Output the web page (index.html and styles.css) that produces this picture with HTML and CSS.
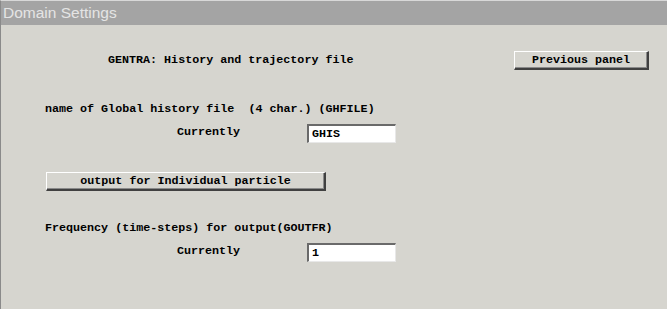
FILE: index.html
```html
<!DOCTYPE html>
<html lang="en">

<head>
  <meta charset="utf-8" />
  <title>Domain Settings</title>
  <link rel="stylesheet" href="styles.css">
</head>

<body>
  <div class="panel">
    <div class="title_bar">Domain Settings</div>

    <div class="head_row">
      <span class="head_text">GENTRA: History and trajectory file</span>
      <button type="button" class="win_btn prev_btn">Previous panel</button>
    </div>

    <div class="label_row first_label">name of Global history file&nbsp;&nbsp;(4 char.) (GHFILE)</div>
    <div class="value_row">
      <span class="value_label">Currently</span>
      <input type="text" class="value_box" value="GHIS">
    </div>

    <div class="btn_row">
      <button type="button" class="win_btn wide_btn">output for Individual particle</button>
    </div>

    <div class="label_row">Frequency (time-steps) for output(GOUTFR)</div>
    <div class="value_row">
      <span class="value_label">Currently</span>
      <input type="text" class="value_box" value="1">
    </div>
  </div>
</body>

</html>
```

FILE: styles.css
```css
html,
body {
  margin: 0;
  height: 100%;
}

body {
  background: #d6d5cf;
  font-family: "Liberation Mono", "Courier New", monospace;
  font-weight: bold;
  font-size: 11.7px;
  color: #000;
}

.panel {
  height: 100%;
  border-left: 1px solid #8a8a8a;
  border-top: 1px solid #d8d8d8;
  box-sizing: border-box;
}

.title_bar {
  height: 24px;
  line-height: 24px;
  background: #a4a4a4;
  color: #e4e4e4;
  font-family: "Liberation Sans", Arial, sans-serif;
  font-weight: normal;
  font-size: 15.5px;
  padding-left: 2px;
}

.head_row {
  display: flex;
  align-items: center;
  margin-top: 26px;
  height: 19px;
}

.head_text {
  margin-left: 107px;
  margin-top: -2px;
}

.win_btn {
  font: inherit;
  color: #000;
  background: #d6d5cf;
  height: 19px;
  padding: 0;
  box-sizing: border-box;
  border-style: solid;
  border-width: 1px 2px 2px 1px;
  border-color: #fff #404040 #404040 #fff;
  box-shadow: inset -1px -1px 0 #8a8a8a;
}

.prev_btn {
  margin-left: auto;
  margin-right: 18px;
  width: 135px;
}

.label_row {
  height: 14px;
  line-height: 14px;
  padding-left: 44px;
  margin-top: 30px;
}

.first_label {
  margin-top: 32px;
}

.value_row {
  display: flex;
  align-items: center;
  margin-top: 8px;
  height: 19px;
}

.value_label {
  margin-left: 176px;
  width: 130px;
  margin-top: -3px;
}

.value_box {
  font: inherit;
  width: 89px;
  height: 19px;
  box-sizing: border-box;
  padding: 0 0 0 3px;
  background: #fff;
  border-style: solid;
  border-width: 2px 1px 1px 2px;
  border-color: #6a6a6a #e8e8e8 #e8e8e8 #6a6a6a;
  outline: none;
}

.btn_row {
  margin-top: 29px;
  padding-left: 45px;
  height: 19px;
}

.wide_btn {
  width: 280px;
}
```
